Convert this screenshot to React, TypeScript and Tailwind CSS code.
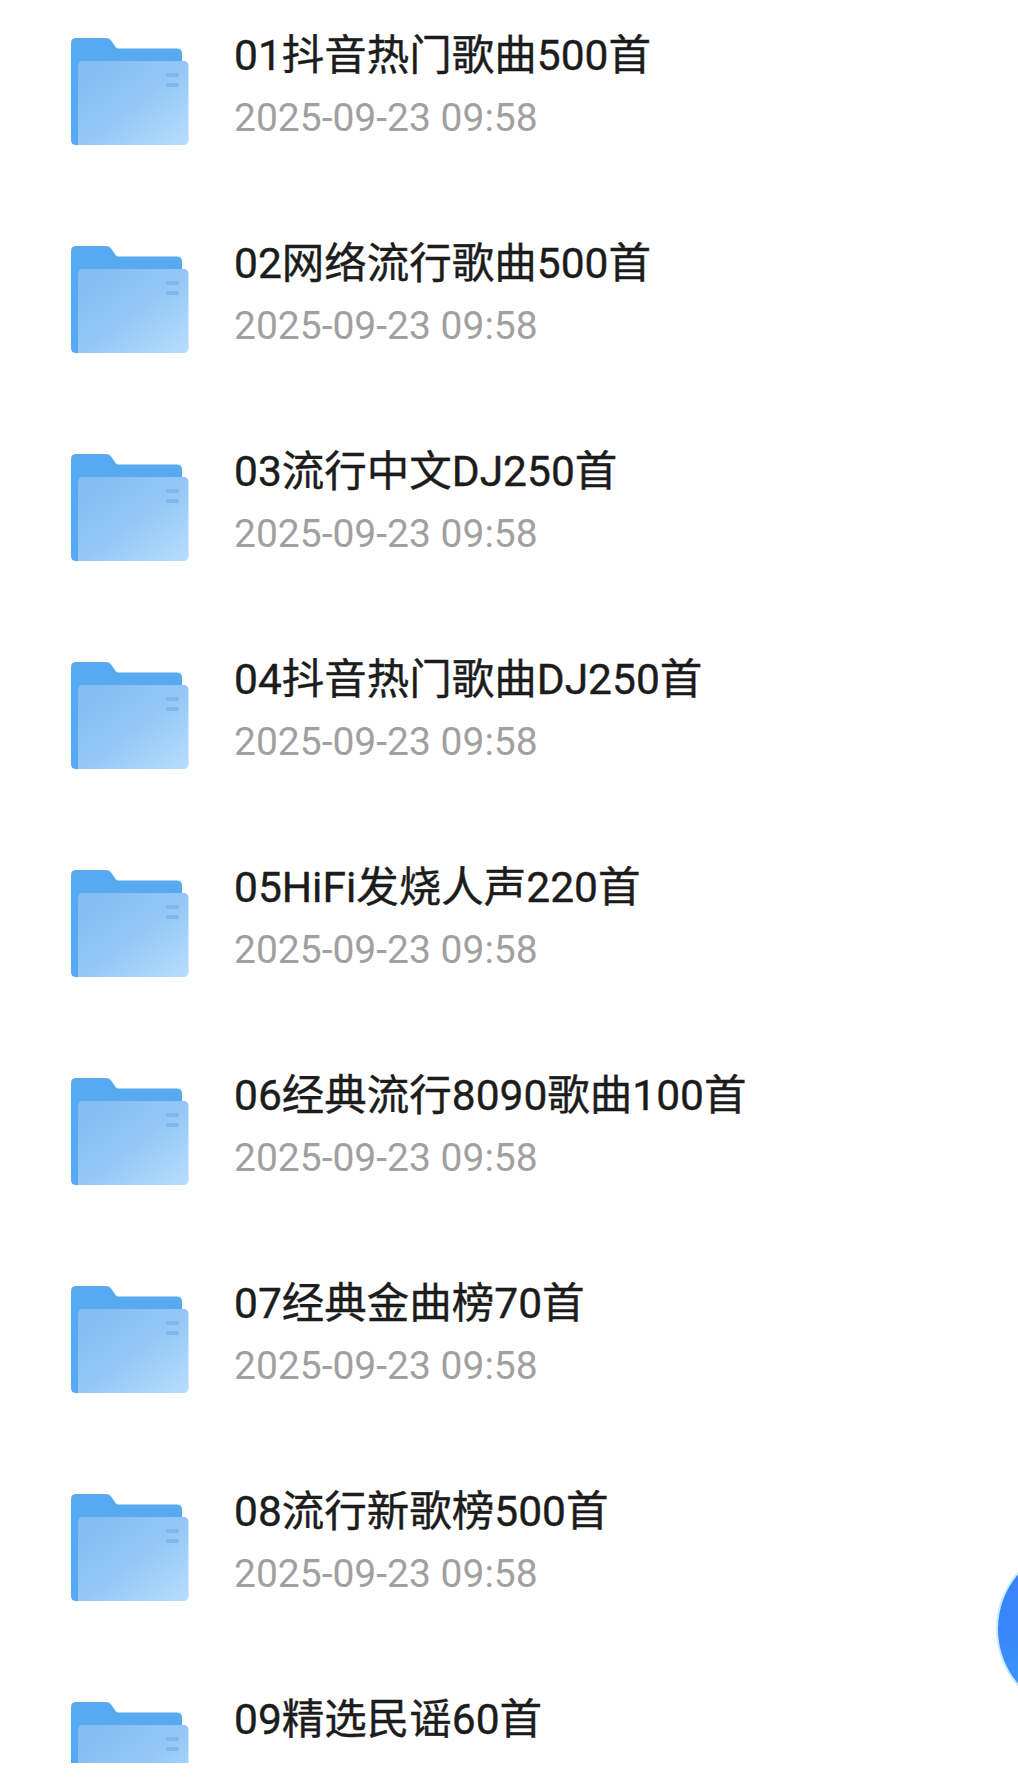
const items = [
  "01抖音热门歌曲500首",
  "02网络流行歌曲500首",
  "03流行中文DJ250首",
  "04抖音热门歌曲DJ250首",
  "05HiFi发烧人声220首",
  "06经典流行8090歌曲100首",
  "07经典金曲榜70首",
  "08流行新歌榜500首",
  "09精选民谣60首",
];

function Folder({ id }: { id: number }) {
  const g = `front-${id}`;
  return (
    <svg width="118" height="108" viewBox="0 0 118 108" className="shrink-0">
      <defs>
        <linearGradient id={g} x1="0.1" y1="0.1" x2="0.95" y2="0.95">
          <stop offset="0" stopColor="#84bdf2" />
          <stop offset="0.5" stopColor="#94c8f6" />
          <stop offset="1" stopColor="#b4dbfc" />
        </linearGradient>
      </defs>
      <path
        d="M5 0H35Q38.500 0 40.500 3L45 9.500Q46 10.500 48 10.500H106Q111 10.500 111 15.500V107H5Q0 107 0 102V5Q0 0 5 0Z"
        fill="#57aaf2"
      />
      <path
        d="M12 23H112Q117.500 23 117.500 28V102Q117.500 107 112 107H7V28Q7 23 12 23Z"
        fill={`url(#${g})`}
      />
      <rect x="95" y="35" width="13" height="4" rx="2" fill="#82b8ec" />
      <rect x="95" y="45" width="13" height="4" rx="2" fill="#82b8ec" />
    </svg>
  );
}

export default function App() {
  return (
    <div className="relative h-[1778px] w-[1018px] overflow-hidden bg-white font-['Roboto','Noto_Sans_CJK_SC',sans-serif]">
      <div className="h-[1763px] overflow-hidden pl-[71px] pt-[38px]">
        <div className="flex flex-col gap-[100px]">
          {items.map((name, i) => (
            <div key={name} className="flex h-[108px] items-start gap-[45px]">
              <Folder id={i} />
              <div className="-mt-[7px] flex flex-col">
                <div className="h-[50px] whitespace-nowrap text-[42.5px] leading-[50px] font-normal text-[#1c1c1c] [-webkit-text-stroke:0.4px_#1c1c1c]">
                  {name}
                </div>
                <div className="mt-[17px] h-[40px] whitespace-nowrap text-[39px] leading-[40px] text-[#a0a0a0]">
                  {i < 8 ? "2025-09-23 09:58" : ""}
                </div>
              </div>
            </div>
          ))}
        </div>
      </div>
      <div className="absolute left-[996px] top-[1543px] h-[172px] w-[172px] rounded-full border-2 border-[#c4ecfc] bg-gradient-to-b from-[#3a80fb] via-[#3a86fb] to-[#3c9cf6]" />
    </div>
  );
}
